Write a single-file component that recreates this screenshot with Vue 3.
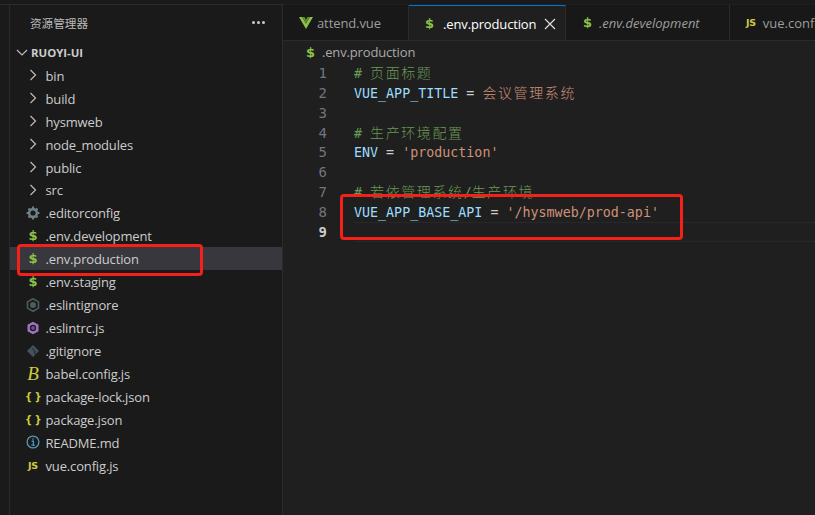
<script setup>
const tree = [
  { name: 'bin', kind: 'folder' }, { name: 'build', kind: 'folder' }, { name: 'hysmweb', kind: 'folder' },
  { name: 'node_modules', kind: 'folder' }, { name: 'public', kind: 'folder' }, { name: 'src', kind: 'folder' },
  { name: '.editorconfig', kind: 'gear' }, { name: '.env.development', kind: 'env' },
  { name: '.env.production', kind: 'env', active: true }, { name: '.env.staging', kind: 'env' },
  { name: '.eslintignore', kind: 'eslintgrey' }, { name: '.eslintrc.js', kind: 'eslint' },
  { name: '.gitignore', kind: 'git' }, { name: 'babel.config.js', kind: 'babel' },
  { name: 'package-lock.json', kind: 'json' }, { name: 'package.json', kind: 'json' },
  { name: 'README.md', kind: 'info' }, { name: 'vue.config.js', kind: 'js' }
]
const lines = [
  [['c', '# '], ['cc', '页面标题']],
  [['k', 'VUE_APP_TITLE'], ['o', ' = '], ['sc', '会议管理系统']],
  [],
  [['c', '# '], ['cc', '生产环境配置']],
  [['k', 'ENV'], ['o', ' = '], ['s', "'production'"]],
  [],
  [['c', '# '], ['cc', '若依管理系统'], ['c', '/'], ['cc', '生产环境']],
  [['k', 'VUE_APP_BASE_API'], ['o', ' = '], ['s', "'/hysmweb/prod-api'"]],
  []
]
</script>

<template>
  <div class="window">
    <div class="rail"></div>
    <aside class="side">
      <div class="side-head"><span>资源管理器</span><span class="dots"><i></i><i></i><i></i></span></div>
      <div class="root">
        <svg class="chev" width="16" height="16" viewBox="0 0 16 16"><path d="M3 6l5 5 5-5" /></svg>
        <span>RUOYI-UI</span>
      </div>
      <div v-for="f in tree" :key="f.name" class="row" :class="{ active: f.active }">
        <span class="ico">
          <svg v-if="f.kind === 'folder'" class="chev" width="16" height="16" viewBox="0 0 16 16"><path d="M5.5 3l5 5-5 5" /></svg>
          <svg v-else-if="f.kind === 'gear'" width="14" height="14" viewBox="0 0 14 14"><circle cx="7" cy="7" r="3.9" fill="none" stroke="#6d8086" stroke-width="2.6"/><path d="M7 .6v2.4M7 11v2.4M.6 7H3M11 7h2.4M2.5 2.5l1.7 1.7M9.8 9.8l1.7 1.7M11.5 2.5L9.8 4.2M4.2 9.8l-1.7 1.7" stroke="#6d8086" stroke-width="2.1"/></svg>
          <b v-else-if="f.kind === 'env'" class="dollar">$</b>
          <svg v-else-if="f.kind === 'eslintgrey'" width="14" height="14" viewBox="0 0 14 14"><path d="M7 .7l5.5 3.15v6.3L7 13.3l-5.5-3.15v-6.3z" fill="none" stroke="#4d5a5e" stroke-width="1.6"/><circle cx="7" cy="7" r="3" fill="#4d5a5e"/></svg>
          <svg v-else-if="f.kind === 'eslint'" width="14" height="14" viewBox="0 0 14 14"><path d="M7 .7l5.5 3.15v6.3L7 13.3l-5.5-3.15v-6.3z" fill="#a074c4"/><circle cx="7" cy="7" r="3.2" fill="#1a1a1a"/><circle cx="7" cy="7" r="1.9" fill="#6f4f8a"/></svg>
          <svg v-else-if="f.kind === 'git'" width="14" height="14" viewBox="0 0 14 14"><path d="M7 1l6 6-6 6-6-6z" fill="#41535b"/><path d="M6.2 4.5l2.6 2.6v3" fill="none" stroke="#1a1a1a" stroke-width="1"/></svg>
          <span v-else-if="f.kind === 'babel'" class="babel">B</span>
          <span v-else-if="f.kind === 'json'" class="json">{ }</span>
          <svg v-else-if="f.kind === 'info'" width="14" height="14" viewBox="0 0 14 14"><circle cx="7" cy="7" r="5.9" fill="none" stroke="#519aba" stroke-width="1.3"/><path d="M7 3.2v1.5M5.6 6.2H7.4v4M5.4 10.2h3.4" fill="none" stroke="#519aba" stroke-width="1.2"/></svg>
          <span v-else-if="f.kind === 'js'" class="js">JS</span>
        </span>
        <span class="label">{{ f.name }}</span>
      </div>
    </aside>
    <main class="editor">
      <div class="tabs">
        <div class="tab t1">
          <svg width="14" height="12" viewBox="0 0 14 12"><path d="M0 0h3.2L7 6.6 10.8 0H14L7 12z" fill="#8dc149"/><path d="M3.2 0h2.4L7 2.6 8.4 0h2.4L7 6.6z" fill="#5f8a2e"/></svg>
          <span>attend.vue</span>
        </div>
        <div class="tab current t2">
          <b class="dollar">$</b>
          <span class="cur-name">.env.production</span>
          <svg class="close" width="12" height="12" viewBox="0 0 12 12"><path d="M1 1l10 10M11 1L1 11" /></svg>
        </div>
        <div class="tab t3"><b class="dollar">$</b><span class="it">.env.development</span></div>
        <div class="tab t4"><span class="js">JS</span><span>vue.config.js</span></div>
      </div>
      <div class="crumb"><b class="dollar">$</b><span>.env.production</span></div>
      <div class="code">
        <div v-for="(l, i) in lines" :key="i" class="line" :class="{ last: i === 8 }">
          <span class="num">{{ i + 1 }}</span>
          <span class="txt"><span v-for="(t, j) in l" :key="j" :class="t[0]">{{ t[1] }}</span></span>
        </div>
      </div>
    </main>
    <div class="mark mark-file"></div>
    <div class="mark mark-code"></div>
  </div>
</template>

<style>
html, body { margin: 0; background: #1a1a1a; }
</style>

<style scoped>
.window { position: relative; width: 815px; height: 515px; overflow: hidden; display: flex; background: #1a1a1a; box-sizing: border-box; padding-top: 4px; font-family: "Open Sans", "Noto Sans CJK SC", sans-serif; }
.window::before { content: ""; position: absolute; left: 0; right: 0; top: 4px; height: 1px; background: #2b2b2b; }
.rail { width: 9px; flex: none; border-right: 1px solid #2b2b2b; }
.side { width: 272px; flex: none; border-right: 1px solid #2b2b2b; color: #ccc; }
.side-head { height: 35px; display: flex; align-items: center; justify-content: space-between; padding: 0 17px 0 20px; font-size: 11.6px; color: #bbb; margin-top: 1px; }
.dots { display: flex; gap: 2px; }
.dots i { width: 3px; height: 3px; border-radius: 50%; background: #ccc; }
.root { height: 22px; display: flex; align-items: center; font-size: 11.4px; font-weight: 700; color: #ccc; padding-left: 4px; gap: 1px; margin: 1px 0 0.8px; }
.chev { fill: none; stroke: #bbb; stroke-width: 1.2; flex: none; }
.row { height: 22.94px; display: flex; align-items: center; padding-left: 16px; font-size: 13px; color: #ccc; }
.row.active { background: #37373d; }
.ico { width: 14px; margin-right: 5.5px; flex: none; display: flex; justify-content: center; align-items: center; font-family: "DejaVu Sans", sans-serif; }
.label { white-space: nowrap; letter-spacing: -0.15px; padding-top: 1px; }
.dollar { color: #8dc149; font-family: "DejaVu Sans", sans-serif; font-size: 13px; font-weight: 700; }
.babel { color: #cbcb41; font-family: "Liberation Serif", serif; font-size: 19px; font-weight: 400; font-style: italic; line-height: 1; }
.json { color: #cbcb41; font-family: "DejaVu Sans", sans-serif; font-size: 10px; font-weight: 700; white-space: nowrap; letter-spacing: -0.5px; }
.js { color: #cbcb41; font-family: "DejaVu Sans", sans-serif; font-size: 9.5px; font-weight: 700; letter-spacing: -0.3px; }
.editor { flex: 1; min-width: 0; background: #1f1f1f; position: relative; }
.tabs { height: 35px; margin-top: 1px; display: flex; background: #181818; border-bottom: 1px solid #2b2b2b; box-sizing: content-box; overflow: hidden; }
.tab { height: 35px; flex: none; display: flex; align-items: center; font-size: 13px; color: #9d9d9d; border-right: 1px solid #2b2b2b; box-sizing: border-box; white-space: nowrap; }
.t1 { width: 126px; padding-left: 16px; gap: 4px; letter-spacing: -0.1px; }
.t2 { width: 157px; padding-left: 16px; }
.t3 { width: 164px; padding-left: 17px; gap: 7px; }
.t4 { width: 100px; padding-left: 16px; gap: 7px; border-right: 0; }
.current { background: #1f1f1f; color: #fff; border-top: 1px solid #0078d4; height: 36px; }
.cur-name { margin-left: 9px; letter-spacing: -0.15px; }
.close { fill: none; stroke: #ddd; stroke-width: 1.2; margin-left: 8px; flex: none; }
.it { font-style: italic; }
.crumb { height: 22px; display: flex; align-items: center; padding-left: 23px; gap: 7px; font-size: 13px; color: #a9a9a9; letter-spacing: -0.15px; }
.code { font-family: "DejaVu Sans Mono", monospace; font-size: 13.34px; padding-top: 0.2px; }
.line { height: 19.85px; display: flex; align-items: center; white-space: pre; }
.num { width: 44px; flex: none; text-align: right; color: #6e7681; font-size: 14px; }
.txt { margin-left: 27px; flex: 1; }
.last .num { color: #ccc; font-weight: 700; }
.last .txt { border-top: 1px solid #282828; border-bottom: 1px solid #282828; height: 18px; }
.c { color: #6a9955; }
.cc { color: #6a9955; font-family: "Noto Sans CJK SC", sans-serif; font-size: 14px; letter-spacing: 1.6px; line-height: 1; font-weight: 300; }
.k { color: #9cdcfe; }
.o { color: #ccc; }
.s { color: #ce9178; }
.sc { color: #ce9178; font-family: "Noto Sans CJK SC", sans-serif; font-size: 14px; letter-spacing: 1.6px; line-height: 1; font-weight: 300; }
.mark { position: absolute; border: 3px solid #f4201a; border-radius: 4px; box-sizing: border-box; pointer-events: none; }
.mark-file { left: 17px; top: 244px; width: 186px; height: 32px; }
.mark-code { left: 340px; top: 194px; width: 343px; height: 46px; }
</style>
